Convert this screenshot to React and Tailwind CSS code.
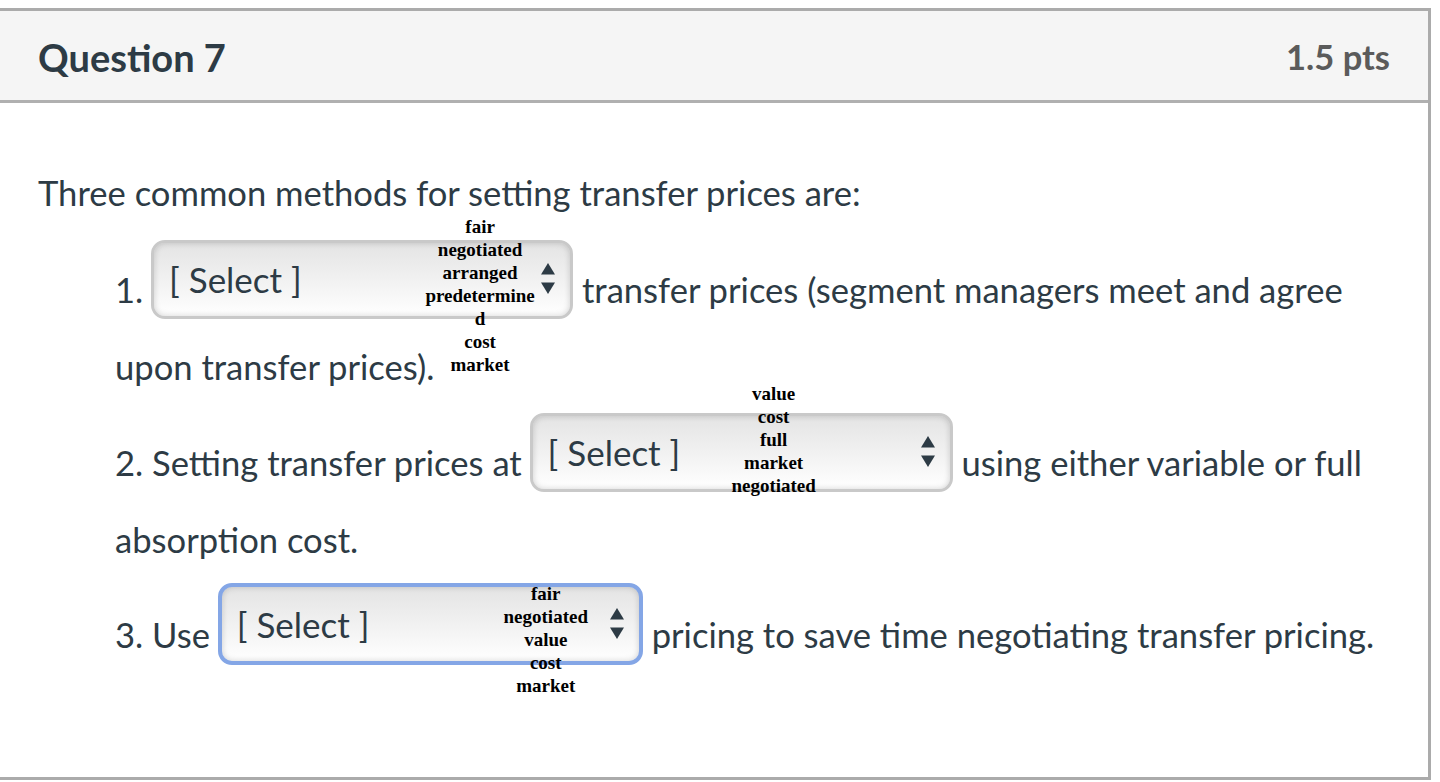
import React from 'react'

const lato = { fontFamily: 'Lato, "Noto Sans", sans-serif' }

const Arrows = () => (
    <svg width="16" height="34" viewBox="0 0 16 34" className="shrink-0">
        <path d="M8 1 L15 12.5 L1 12.5 Z" fill="#2d3b45" />
        <path d="M1 20.5 L15 20.5 L8 32 Z" fill="#2d3b45" />
    </svg>
)

/**
 * Fake dropdown — a glossy select with its option labels spilling over it.
 */
const Select = ({ options, width, height, focused, optLeft, optTop }) => {
    return (
        <span
            className={`relative inline-flex items-center align-[10px] -my-[14px] ml-[-1px] rounded-[14px] bg-gradient-to-b from-[#e4e4e4] via-[#f1f1f1] to-white pl-[15px] pr-[14px] shadow-[inset_0_0_6px_rgba(0,0,0,0.18)] ${focused ? 'border-[4px] border-[#84a6e6]' : 'border-[3px] border-[#c9c9c9]'}`}
            style={{ width, height }}
        >
            <span className="flex-1 text-[35px] leading-[40px] text-[#2d3b45]">[ Select ]</span>
            <Arrows />
            <span
                className="absolute -translate-x-1/2 whitespace-nowrap text-center text-[19px] font-bold leading-[23px] text-black"
                style={{ left: optLeft, top: optTop, fontFamily: '"Liberation Serif", "Times New Roman", serif' }}
            >
                {options.map((o, i) => (
                    <div key={i}>{o}</div>
                ))}
            </span>
        </span>
    )
}

export default function App() {
    return (
        <div className="min-h-screen bg-white pt-[8px] overflow-hidden" style={lato}>
            <div className="ml-[-3px] w-[1434px] h-[772px] border-[3px] border-[#ababab] flex flex-col">
                {/* Header */}
                <div className="h-[92px] shrink-0 flex items-center justify-between bg-[#f5f5f5] border-b-[3px] border-[#b0b0b0] px-[38px] pt-[3px]">
                    <h2 className="text-[38px] font-bold text-[#2d3b45]">Question 7</h2>
                    <span className="text-[34.5px] font-bold text-[#5b5b5b]">1.5 pts</span>
                </div>

                {/* Body */}
                <div className="flex-1 pt-[51px] px-[38px] text-[34.6px] leading-[77px] text-[#2d3b45]">
                    <p>Three common methods for setting transfer prices are:</p>

                    <p className="mt-[20px] pl-[77px]">
                        1.{' '}
                        <Select
                            width={422}
                            height={79}
                            options={['fair', 'negotiated', 'arranged', 'predetermine', 'd', 'cost', 'market']}
                            optLeft={326}
                            optTop={-28}
                        />{' '}
                        transfer prices (segment managers meet and agree upon transfer prices).
                    </p>

                    <p className="mt-[19px] pl-[77px]">
                        2. Setting transfer prices at{' '}
                        <Select
                            width={423}
                            height={79}
                            options={['value', 'cost', 'full', 'market', 'negotiated']}
                            optLeft={241}
                            optTop={-34}
                        />{' '}
                        using either variable or full absorption cost.
                    </p>

                    <p className="mt-[18px] pl-[77px]">
                        3. Use{' '}
                        <Select
                            width={425}
                            height={82}
                            focused
                            options={['fair', 'negotiated', 'value', 'cost', 'market']}
                            optLeft={324}
                            optTop={-5}
                        />{' '}
                        pricing to save time negotiating transfer pricing.
                    </p>
                </div>
            </div>
        </div>
    )
}
